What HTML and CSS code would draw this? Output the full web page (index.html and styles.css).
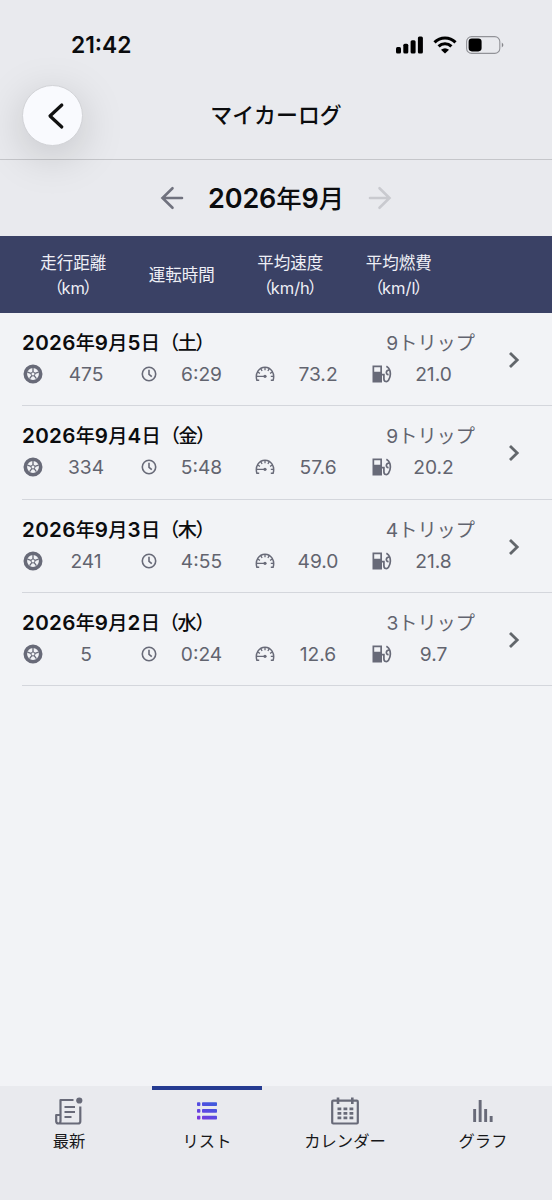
FILE: index.html
```
<!DOCTYPE html>
<html lang="ja">
<head>
<meta charset="utf-8">
<title>マイカーログ</title>
<link rel="stylesheet" href="styles.css">
</head>
<body>
<svg class="defs" width="0" height="0" aria-hidden="true">
  <symbol id="wheel" viewBox="0 0 20 20">
    <circle cx="10" cy="10" r="7.700" fill="none" stroke="currentColor" stroke-width="3.600"/>
    <circle cx="10" cy="10" r="2" fill="none" stroke="currentColor" stroke-width="1"/>
    <path d="M10 8V4M12 9.400l3.600-1.200M11.200 11.700l2.200 3M8.800 11.700l-2.200 3M8 9.400l-3.600-1.200" stroke="currentColor" stroke-width="1.300"/>
  </symbol>
  <symbol id="clock" viewBox="0 0 16 16">
    <circle cx="8" cy="8" r="6.700" fill="none" stroke="currentColor" stroke-width="1.600"/>
    <path d="M8 3.800v4.500l2.800 2.400" fill="none" stroke="currentColor" stroke-width="1.600"/>
  </symbol>
  <symbol id="meter" viewBox="0 0 20 16">
    <path d="M4.200 14.300H1.900C-.2 7.500 4 1.200 10 1.200s10.200 6.300 8.100 13.100H15.800" fill="none" stroke="currentColor" stroke-width="1.500"/>
    <path d="M10 1v3.200M5.700 2.500l1.400 2.500M14.300 2.500l-1.400 2.500M2.500 6l2.500 1.300M17.500 6l-2.500 1.300M15.800 10.300h3M1 10.300h8" stroke="currentColor" stroke-width="1.300"/>
    <circle cx="10" cy="10.300" r="1.600" fill="currentColor"/>
  </symbol>
  <symbol id="fuel" viewBox="0 0 20 18">
    <path fill="currentColor" fill-rule="evenodd" d="M.5.500h9.500v17H.5zM2.200 2.300v4.400h6.100V2.300z"/>
    <path d="M9.800 9.700h2.100v4.100c0 3.500 3.300 3.300 4.600 1.400 1.800-2.700 2.200-6.800 1.300-9.900C17.200 3.600 16 2.300 14.400 1.300M17.600 5.300c-3.400-1-4.700 4-1 4.400" fill="none" stroke="currentColor" stroke-width="1.700"/>
  </symbol>
  <symbol id="chevron" viewBox="0 0 12 18">
    <path d="M2 2l7.200 7L2 16" fill="none" stroke="currentColor" stroke-width="2.800"/>
  </symbol>
</svg>

<header class="top">
  <div class="status">
    <span class="time">21:42</span>
    <div class="indicators">
      <svg class="signal" viewBox="0 0 28 18"><rect x="0" y="11" width="5" height="6.500" rx="1.500"/><rect x="7.300" y="7.800" width="5" height="9.700" rx="1.500"/><rect x="14.600" y="4.200" width="5" height="13.300" rx="1.500"/><rect x="21.900" y=".5" width="5" height="17" rx="1.500"/></svg>
      <svg class="wifi" viewBox="0 0 24 18"><path d="M1.500 6.300a15 15 0 0 1 21 0M5.600 10.400a9.200 9.200 0 0 1 12.800 0" fill="none" stroke="#000" stroke-width="3.100"/><path d="M8 13.800q4-3.300 8 0l-4 3.800z"/></svg>
      <svg class="battery" viewBox="0 0 38 18"><rect x=".6" y=".6" width="33.200" height="16.800" rx="5" fill="none" stroke="#929398" stroke-width="1.100"/><rect x="2.600" y="2.600" width="13" height="12.800" rx="3.300"/><path d="M35.800 6.500q3.200 2.500 0 5z" fill="#85868b"/></svg>
    </div>
  </div>
  <div class="nav">
    <button class="back" aria-label="戻る"><svg viewBox="0 0 18 28"><path d="M14.800 3L3 14l11.800 11" fill="none" stroke="#111" stroke-width="3.200" stroke-linecap="round" stroke-linejoin="round"/></svg></button>
    <h1>マイカーログ</h1>
  </div>
</header>

<section class="month">
  <svg class="arrow" viewBox="0 0 24 24"><path d="M22 12H3M12.500 2.200L2.500 12l10 9.800"/></svg>
  <h2><b>2026</b>年<b>9</b>月</h2>
  <svg class="arrow next" viewBox="0 0 24 24"><path d="M2 12h19M11.500 2.200L21.500 12l-10 9.800"/></svg>
</section>

<div class="columns">
  <span>走行距離<br>（<em>km</em>）</span><span>運転時間</span><span>平均速度<br>（<em>km/h</em>）</span><span>平均燃費<br>（<em>km/l</em>）</span>
</div>

<main class="list">
  <article class="row">
    <div class="head"><h3><b>2026</b>年<b>9</b>月<b>5</b>日（<em>土</em>）</h3><span class="trips"><i>9</i>トリップ</span></div>
    <div class="stats">
      <svg class="wheel"><use href="#wheel"/></svg><span>475</span>
      <svg class="clock"><use href="#clock"/></svg><span>6:29</span>
      <svg class="meter"><use href="#meter"/></svg><span>73.2</span>
      <svg class="fuel"><use href="#fuel"/></svg><span>21.0</span>
    </div>
    <svg class="chevron"><use href="#chevron"/></svg>
  </article>
  <article class="row">
    <div class="head"><h3><b>2026</b>年<b>9</b>月<b>4</b>日（<em>金</em>）</h3><span class="trips"><i>9</i>トリップ</span></div>
    <div class="stats">
      <svg class="wheel"><use href="#wheel"/></svg><span>334</span>
      <svg class="clock"><use href="#clock"/></svg><span>5:48</span>
      <svg class="meter"><use href="#meter"/></svg><span>57.6</span>
      <svg class="fuel"><use href="#fuel"/></svg><span>20.2</span>
    </div>
    <svg class="chevron"><use href="#chevron"/></svg>
  </article>
  <article class="row">
    <div class="head"><h3><b>2026</b>年<b>9</b>月<b>3</b>日（<em>木</em>）</h3><span class="trips"><i>4</i>トリップ</span></div>
    <div class="stats">
      <svg class="wheel"><use href="#wheel"/></svg><span>241</span>
      <svg class="clock"><use href="#clock"/></svg><span>4:55</span>
      <svg class="meter"><use href="#meter"/></svg><span>49.0</span>
      <svg class="fuel"><use href="#fuel"/></svg><span>21.8</span>
    </div>
    <svg class="chevron"><use href="#chevron"/></svg>
  </article>
  <article class="row">
    <div class="head"><h3><b>2026</b>年<b>9</b>月<b>2</b>日（<em>水</em>）</h3><span class="trips"><i>3</i>トリップ</span></div>
    <div class="stats">
      <svg class="wheel"><use href="#wheel"/></svg><span>5</span>
      <svg class="clock"><use href="#clock"/></svg><span>0:24</span>
      <svg class="meter"><use href="#meter"/></svg><span>12.6</span>
      <svg class="fuel"><use href="#fuel"/></svg><span>9.7</span>
    </div>
    <svg class="chevron"><use href="#chevron"/></svg>
  </article>
</main>

<nav class="tabs">
  <a class="tab">
    <svg viewBox="0 0 28 28" fill="none" stroke="currentColor" stroke-width="2.200" stroke-linejoin="round"><path d="M18.500 3H5.500v21q0 2.500-2 2.500T1.200 24.500V18h4M3.500 26.500H23q2.300 0 2.300-2V9.500M9.500 10H20M9.500 15H20M9.500 20h7"/><circle cx="24.300" cy="3.500" r="3.100" fill="currentColor" stroke="none"/></svg>
    <span>最新</span>
  </a>
  <a class="tab active">
    <svg viewBox="0 0 28 28">
      <defs><linearGradient id="accent" gradientUnits="userSpaceOnUse" x1="20" y1="5" x2="8" y2="24"><stop offset="0" stop-color="#3f5bdc"/><stop offset=".55" stop-color="#5b48e2"/><stop offset="1" stop-color="#7c35dc"/></linearGradient></defs>
      <g fill="url(#accent)"><rect x="4" y="5.300" width="3.400" height="3.700" rx=".8"/><rect x="4" y="12.100" width="3.400" height="3.700" rx=".8"/><rect x="4" y="18.800" width="3.400" height="3.700" rx=".8"/><rect x="9" y="5.300" width="15" height="3.700" rx=".8"/><rect x="9" y="12.100" width="15" height="3.700" rx=".8"/><rect x="9" y="18.800" width="15" height="3.700" rx=".8"/></g>
    </svg>
    <span>リスト</span>
  </a>
  <a class="tab">
    <svg viewBox="0 0 28 28"><rect x="1.200" y="3.700" width="25.600" height="22.800" rx="1" fill="none" stroke="currentColor" stroke-width="2.200"/><path d="M7 .5v6.500M21.300 .5v6.500" stroke="currentColor" stroke-width="2.600"/><path d="M6.500 11.800h16M6.500 16.300h16M6.500 20.800h16" stroke="currentColor" stroke-width="2.700" stroke-dasharray="3.800 2.200"/></svg>
    <span>カレンダー</span>
  </a>
  <a class="tab">
    <svg viewBox="0 0 28 28" fill="currentColor"><rect x="4.200" y="12" width="2.900" height="13"/><rect x="9.700" y="3" width="2.900" height="22"/><rect x="15.200" y="12" width="2.900" height="13"/><rect x="20.700" y="19" width="2.900" height="6"/></svg>
    <span>グラフ</span>
  </a>
</nav>
</body>
</html>
```
FILE: styles.css
```
* { box-sizing: border-box; }
body {
  margin: 0;
  width: 552px;
  height: 1200px;
  display: flex;
  flex-direction: column;
  background: #f2f3f6;
  color: #0b0c0e;
  font-family: Inter, "Noto Sans CJK JP", sans-serif;
  overflow: hidden;
}
svg { display: block; flex: none; }
.defs { position: absolute; }
h1, h2, h3 { margin: 0; font-weight: 500; white-space: nowrap; }
b { font-weight: 600; }
i, em { font-style: normal; }

.top { height: 160px; flex: none; background: #e9eaee; border-bottom: 1px solid #c5c6ca; }
.status { height: 85px; padding: 5px 48px 0 71px; display: flex; align-items: center; justify-content: space-between; }
.time { font-size: 22.800px; font-weight: 600; line-height: 30px; }
.indicators { display: flex; align-items: center; gap: 9px; }
.signal { width: 28px; height: 18px; }
.wifi { width: 24px; height: 18px; }
.battery { width: 38px; height: 18px; }
.nav { height: 61px; display: grid; grid-template-columns: 83px 1fr 83px; align-items: center; }
.back {
  margin-left: 22px; width: 61px; height: 61px; padding: 0; border: 1px solid #d2d3d7; border-radius: 50%;
  background: #f9fafe; display: flex; align-items: center; justify-content: center;
  position: relative; box-shadow: 0 10px 44px rgba(0, 0, 0, .17);
}
.back svg { width: 18px; height: 28px; margin-left: 6px; }
h1 { font-size: 21.900px; line-height: 30px; text-align: center; padding-bottom: 2px; }

.month { height: 76px; flex: none; background: #e9eaee; display: flex; align-items: center; justify-content: center; gap: 24px; }
.month h2 { font-size: 25.400px; line-height: 36px; padding-top: 2px; letter-spacing: -.1px; }
.month b { font-size: 27px; }
.arrow { width: 24px; height: 24px; fill: none; stroke: #70727e; stroke-width: 2.600; stroke-linecap: round; }
.next { stroke: #c9cacf; }

.columns {
  height: 77px; flex: none; padding: 2px 0 0 19px; background: #3a4165; color: #eeeff6;
  display: grid; grid-template-columns: repeat(4, 108.500px); align-items: center;
  text-align: center; font-size: 16.500px; line-height: 25px;
}
.columns em { margin: 0 -1.500px; }

.row {
  margin-left: 22px; height: 93.300px; padding: 16px 77px 0 0; border-bottom: 1px solid #d4d6dc;
  display: grid; grid-template: 28px 34px / 453px 12px; column-gap: 33px;
}
.head { display: flex; justify-content: space-between; align-items: center; }
h3 { font-size: 19.200px; line-height: 28px; }
h3 b { font-size: 20.600px; letter-spacing: .3px; }
h3 em { margin: 0 -1.500px; }
.trips { color: #62646f; font-size: 19.200px; line-height: 28px; }
.stats {
  grid-row: 2; display: grid; align-items: center; color: #62646f;
  grid-template-columns: 22px 84px 42px 63px 64px 42px 72px 45px;
  font-size: 19.200px;
}
.stats span { text-align: center; white-space: nowrap; }
.stats svg { color: #686a78; }
.stats .wheel { width: 20px; height: 20px; margin-left: 1px; }
.stats .clock { width: 16px; height: 16px; justify-self: center; }
.stats .meter { width: 20px; height: 16px; justify-self: center; }
.stats .fuel { width: 20px; height: 18px; justify-self: center; margin-left: 13px; }
.chevron { grid-column: 2; grid-row: 1 / 3; width: 12px; height: 18px; align-self: center; color: #62666b; }

.tabs { margin-top: auto; height: 114px; flex: none; background: #e9eaee; display: grid; grid-template-columns: repeat(4, 138px); }
.tab { display: flex; flex-direction: column; align-items: center; padding-top: 11px; color: #686a78; }
.tab svg { width: 28px; height: 28px; }
.tab span { color: #17181a; font-size: 16.300px; line-height: 24px; margin-top: 4px; }
.active { position: relative; }
.active::before { content: ""; position: absolute; top: 0; left: 14px; width: 110px; height: 4px; background: #253b91; }
```
